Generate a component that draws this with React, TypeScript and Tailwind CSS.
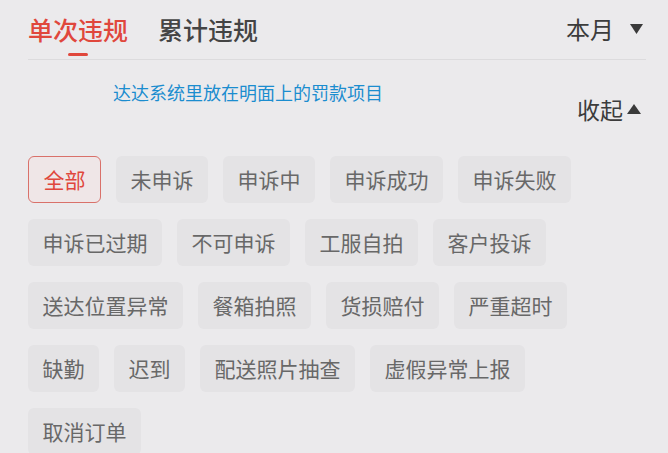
import React from "react";

const rows: string[] = [
  "全部", "未申诉", "申诉中", "申诉成功", "申诉失败",
  "申诉已过期", "不可申诉", "工服自拍", "客户投诉",
  "送达位置异常", "餐箱拍照", "货损赔付", "严重超时",
  "缺勤", "迟到", "配送照片抽查", "虚假异常上报",
  "取消订单",
];

export default function App() {
  const font = { fontFamily: '"Noto Sans CJK SC", "Noto Sans", sans-serif' };
  return (
    <div className="w-[668px] h-[453px] overflow-hidden bg-[#ebeaec]" style={font}>
      <div className="px-[28px]">
        {/* header */}
        <div className="flex items-start justify-between border-b border-[#dcdbdd] pt-[15px] h-[60px] mr-[-6px] pr-[6px]">
          <div className="flex gap-[30px]">
            <div className="flex flex-col items-center">
              <span className="text-[25px] leading-[28px] font-medium text-[#e0473c]">单次违规</span>
              <span className="mt-[10px] w-[20px] h-[3px] bg-[#e0473c] rounded-sm" />
            </div>
            <span className="text-[25px] leading-[28px] font-medium text-[#444444]">累计违规</span>
          </div>
          <div className="flex items-center gap-[16px] mr-[-3px]">
            <span className="text-[24px] leading-[28px] text-[#3c3c3c]">本月</span>
            <svg width="13" height="10" viewBox="0 0 13 10"><path d="M0 0h13L6.5 10z" fill="#3a3a3a" /></svg>
          </div>
        </div>
        {/* annotation + collapse */}
        <div className="relative h-[96px]">
          <div className="absolute left-[85px] top-[21px] text-[18px] leading-[22px] text-[#1b8dcf]">达达系统里放在明面上的罚款项目</div>
          <div className="absolute right-[-1px] top-[35px] flex items-center gap-[4px]">
            <span className="text-[23px] leading-[28px] text-[#3c3c3c]">收起</span>
            <svg width="14" height="10" viewBox="0 0 14 10"><path d="M0 10h14L7 0z" fill="#3a3a3a" /></svg>
          </div>
        </div>
        {/* tags */}
        <div className="flex flex-wrap gap-x-[15px] gap-y-[16px] w-[560px]">
          {rows.map((t, i) => (
            <div
              key={t}
              className={
                i === 0
                  ? "h-[47px] px-[14.5px] flex items-center rounded-[6px] border border-[#d9716a] bg-[#efe6e7] text-[21px] text-[#e0473c]"
                  : "h-[47px] px-[14.5px] flex items-center rounded-[6px] bg-[#e4e3e5] text-[21px] text-[#686868]"
              }
            >
              {t}
            </div>
          ))}
        </div>
      </div>
    </div>
  );
}
